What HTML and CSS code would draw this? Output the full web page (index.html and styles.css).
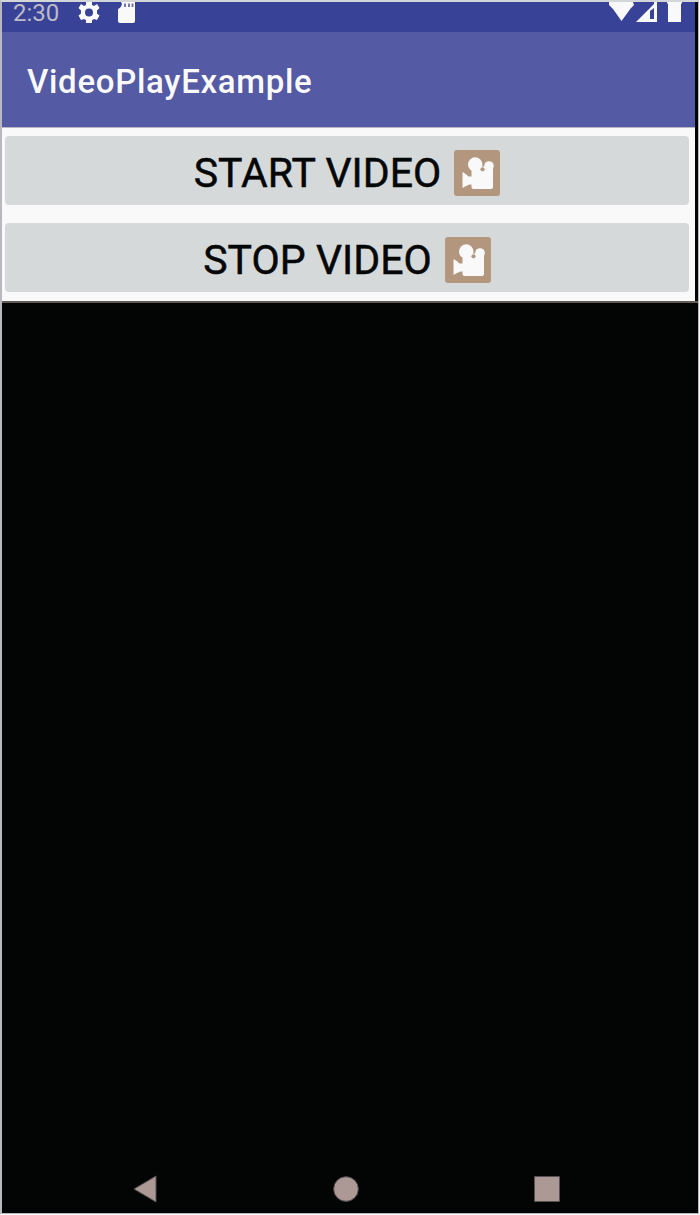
FILE: index.html
```html
<!DOCTYPE html>
<html lang="en">
<head>
<meta charset="utf-8">
<title>VideoPlayExample</title>
<link rel="stylesheet" href="styles.css">
</head>
<body>
<svg class="symbols" aria-hidden="true">
  <symbol id="camera" viewBox="0 0 46 46">
    <rect width="46" height="46" rx="3" fill="#b3967e"/>
    <g fill="#f9f9f9">
      <circle cx="21.200" cy="14.500" r="7.200"/>
      <circle cx="35" cy="16" r="4.800"/>
      <path d="M17.500 19 26 16.500h9l4 2V37q0 2-2 2H19.500q-2 0-2-2v-2.500h-2Q12 35.500 8.500 38V22q3.500 1.500 6 4.500h3z"/>
    </g>
    <circle cx="28.500" cy="19.300" r="2.100" fill="#b3967e"/>
  </symbol>
</svg>
<div class="screen">
  <div class="app">
    <header class="status">
      <span class="clock">2:30</span>
      <svg class="gear" width="22" height="22" viewBox="0 0 22 22"><path d="M8 0h6v3l2 1 3-2 2.500 4L19 8.500v3l2.500 2-2.500 4.500-3-1-2 1.300V21H8v-2.700L6 17l-3 1-2.500-4.500 2.500-2v-3L.5 6 3 2l3 2 2-1z" fill="#f9f9f9"/><circle cx="11" cy="10.500" r="4" fill="#384297"/></svg>
      <svg class="sd" width="19" height="21" viewBox="0 0 19 21"><path d="M4 0h14v19q0 2-2 2H3q-2 0-2-2V7q3-1 4-5z" fill="#f9f9f9"/><path d="M7 1.500h2V5H7zM11 1.500h2V5h-2zM14.500 1.500h2V5h-2z" fill="#7477b0"/></svg>
      <svg class="signals" width="78" height="21" viewBox="0 0 78 21"><path d="M0 0h24l1 3-3 3-9.500 13L4 7 0 3z" fill="#f9f9f9"/><path d="M27 20 45 2V0h3v20z" fill="#f9f9f9"/><path d="M41 9l4-3v11h-4z" fill="#384297"/><path d="M58 0h15v1.500h-1V20H59V1.500h-1z" fill="#f9f9f9"/></svg>
    </header>
    <div class="bar"><h1 class="title">VideoPlayExample</h1></div>
    <main class="actions">
      <button class="btn"><span class="label">START VIDEO</span><svg class="cam"><use href="#camera"/></svg></button>
      <button class="btn"><span class="label">STOP VIDEO</span><svg class="cam"><use href="#camera"/></svg></button>
    </main>
  </div>
  <section class="video">
    <nav class="nav">
      <svg width="24" height="28" viewBox="0 0 24 28"><path d="M1 14 23 1v26z" fill="#ac9996" stroke="#555052"/></svg>
      <svg width="26" height="26" viewBox="0 0 26 26"><circle cx="13" cy="13" r="12.300" fill="#ac9996" stroke="#555052"/></svg>
      <svg width="26" height="26" viewBox="0 0 26 26"><path d="M.5.500h25v25H.5z" fill="#ac9996" stroke="#555052"/></svg>
    </nav>
  </section>
</div>
</body>
</html>
```
FILE: styles.css
```css
* { box-sizing: border-box; }
body { margin: 0; background: #f9f9f9; font-family: Roboto, "Liberation Sans", sans-serif; }
.symbols { display: block; width: 0; height: 0; }
.screen {
  width: 699px; height: 1214px;
  border: 1px solid #b9b7bf; border-top-color: #d3d6d8;
  border-left-width: 2px; border-top-width: 2px;
  display: flex; flex-direction: column;
  background: #020504;
}
.app { width: 693px; height: 299px; background: #f9f9f9; flex: none; }
.status {
  height: 30px; background: #384297; display: flex; align-items: flex-start;
}
.clock {
  width: 66px; margin-left: 11px; color: #bdbbc5;
  font-size: 24px; line-height: 22px;
}
.gear { margin-left: -1px; }
.sd { margin-left: 17px; }
.signals { margin-left: auto; margin-right: 8px; }
.bar {
  height: 96px; padding-left: 25px; background: #555aa4;
  border-bottom: 1px solid #b9b7c5;
  display: flex; align-items: center;
}
.title { margin: 5px 0 0; color: #f9f9f9; font-size: 33px; line-height: 40px; font-weight: 500; letter-spacing: 0.7px; }
.actions { display: flex; flex-direction: column; gap: 18px; padding: 8px 6px 0 3px; }
.btn {
  height: 69px; padding: 0; border: 0; border-radius: 4px;
  background: #d5d9da; color: #050706; font-family: inherit;
  display: flex; align-items: center; justify-content: center; gap: 13px;
}
.label { font-size: 41px; line-height: 48px; font-weight: 400; letter-spacing: 0.05px; margin-top: 4px; -webkit-text-stroke: 0.5px #050706; }
.cam { width: 46px; height: 46px; margin-top: 4px; }
.video {
  flex: 1; border-top: 2px solid #625a56; background: #020504;
  display: flex; flex-direction: column; justify-content: flex-end;
}
.nav { display: flex; align-items: center; padding: 0 0 10px 131px; gap: 176px; }
.nav svg:last-child { margin-left: -1px; }
```
